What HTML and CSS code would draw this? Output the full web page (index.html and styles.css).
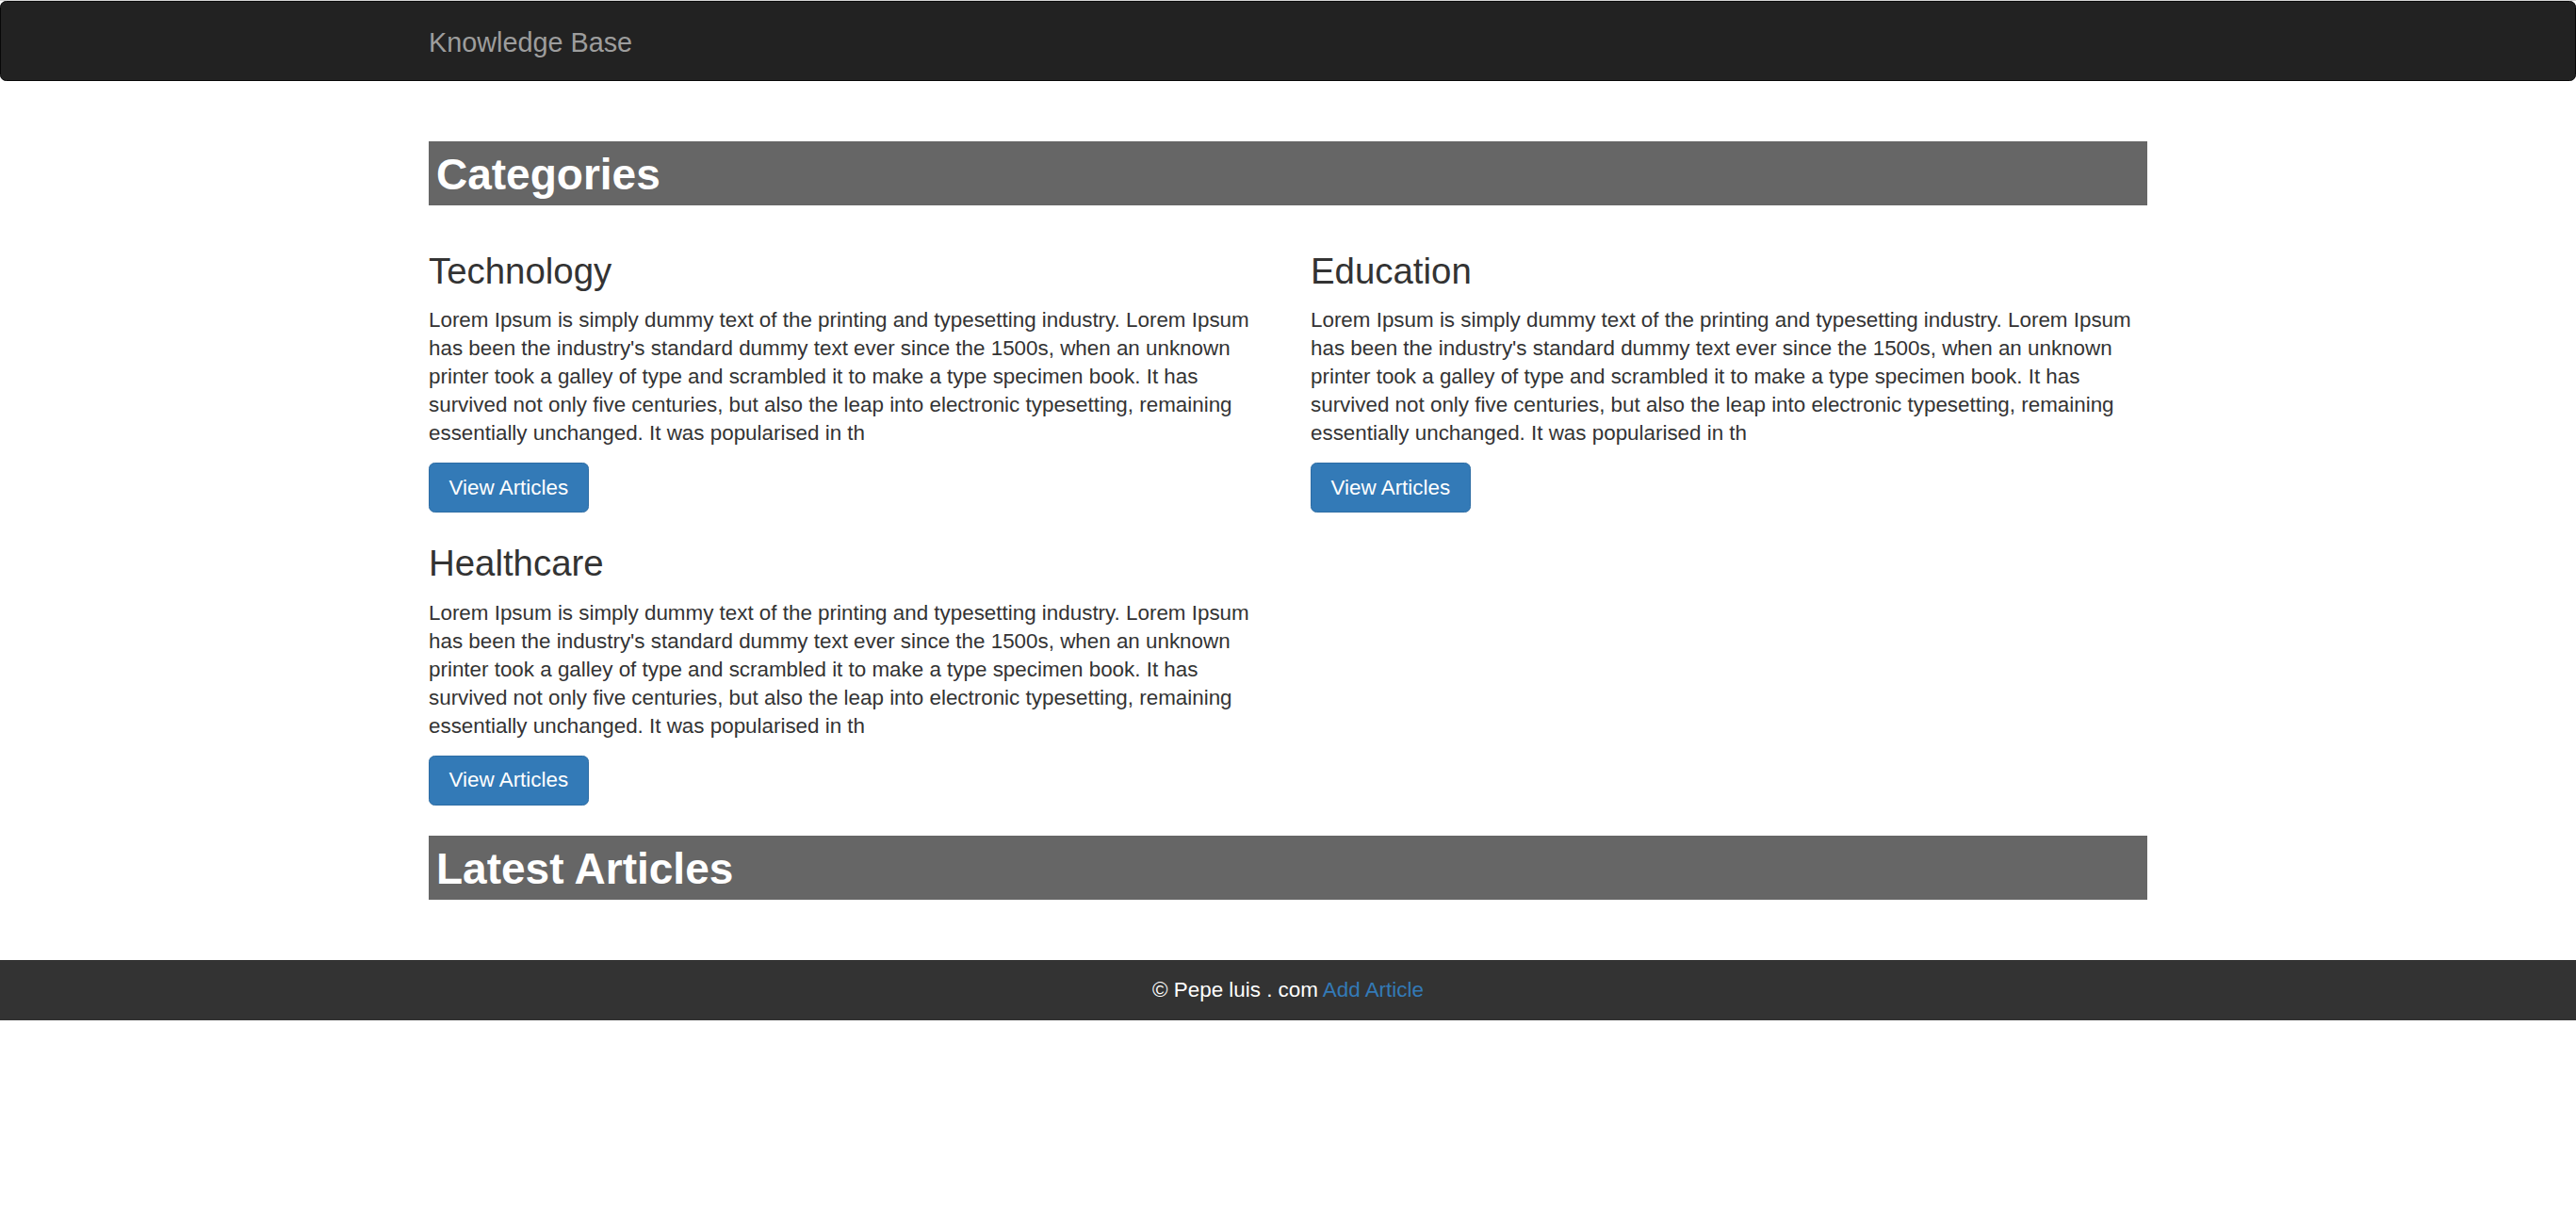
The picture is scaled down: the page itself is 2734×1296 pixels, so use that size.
FILE: index.html
```html
<!DOCTYPE html>
<html lang="en">
<head>
<meta charset="utf-8">
<title>Knowledge Base</title>
<link rel="stylesheet" href="styles.css">
</head>
<body>
<nav class="navbar">
  <div class="container">
    <a class="brand" href="#">Knowledge Base</a>
  </div>
</nav>

<main class="container">
  <h1 class="section-title">Categories</h1>
  <div class="categories">
    <div class="category">
      <h3>Technology</h3>
      <p>Lorem Ipsum is simply dummy text of the printing and typesetting industry. Lorem Ipsum has been the industry's standard dummy text ever since the 1500s, when an unknown printer took a galley of type and scrambled it to make a type specimen book. It has survived not only five centuries, but also the leap into electronic typesetting, remaining essentially unchanged. It was popularised in th</p>
      <a class="btn" href="#">View Articles</a>
    </div>
    <div class="category">
      <h3>Education</h3>
      <p>Lorem Ipsum is simply dummy text of the printing and typesetting industry. Lorem Ipsum has been the industry's standard dummy text ever since the 1500s, when an unknown printer took a galley of type and scrambled it to make a type specimen book. It has survived not only five centuries, but also the leap into electronic typesetting, remaining essentially unchanged. It was popularised in th</p>
      <a class="btn" href="#">View Articles</a>
    </div>
    <div class="category">
      <h3>Healthcare</h3>
      <p>Lorem Ipsum is simply dummy text of the printing and typesetting industry. Lorem Ipsum has been the industry's standard dummy text ever since the 1500s, when an unknown printer took a galley of type and scrambled it to make a type specimen book. It has survived not only five centuries, but also the leap into electronic typesetting, remaining essentially unchanged. It was popularised in th</p>
      <a class="btn" href="#">View Articles</a>
    </div>
  </div>
  <h1 class="section-title">Latest Articles</h1>
</main>

<footer class="footer">
  <p>&copy; Pepe luis . com <a class="footer-link" href="#">Add Article</a></p>
</footer>
</body>
</html>
```

FILE: styles.css
```css
* {
  box-sizing: border-box;
}

html, body {
  margin: 0;
  padding: 0;
}

body {
  background: #fff;
  color: #333;
  font-family: "Liberation Sans", Arial, Helvetica, sans-serif;
  font-size: 22.4px;
  line-height: 30px;
  border-top: 1px solid #d4d4d4;
}

.container {
  width: 1824px;
  margin: 0 auto;
}

.navbar {
  background: #222;
  border: 1.6px solid #080808;
  border-radius: 6.4px;
  height: 85px;
}

.brand {
  display: block;
  padding-top: 26.5px;
  font-size: 28.8px;
  line-height: 32px;
  color: #9d9d9d;
  text-decoration: none;
  width: max-content;
}

.section-title {
  margin: 64px 0 16px;
  padding: 10.4px 8px 7px;
  background: #666;
  color: #fff;
  font-size: 46px;
  font-weight: 700;
  line-height: 1.1;
}

.categories + .section-title {
  margin-top: 32px;
}

.categories {
  display: grid;
  grid-template-columns: 888px 888px;
  column-gap: 48px;
}

.category {
  display: flex;
  flex-direction: column;
  align-items: flex-start;
}

.category h3 {
  margin: 33px 0 16px;
  font-size: 38.4px;
  font-weight: 400;
  line-height: 1.1;
  color: #333;
}

.category p {
  margin: 0 0 16px;
}

.btn {
  display: inline-block;
  padding: 9.6px 20.6px;
  font-size: 22.4px;
  line-height: 32px;
  color: #fff;
  background: #337ab7;
  border: 1.6px solid #2e6da4;
  border-radius: 6.4px;
  text-decoration: none;
}

.footer {
  margin-top: 64px;
  background: #333;
  color: #fff;
  text-align: center;
  padding: 17px 0;
}

.footer p {
  margin: 0;
}

.footer-link {
  color: #337ab7;
  text-decoration: none;
}
```
